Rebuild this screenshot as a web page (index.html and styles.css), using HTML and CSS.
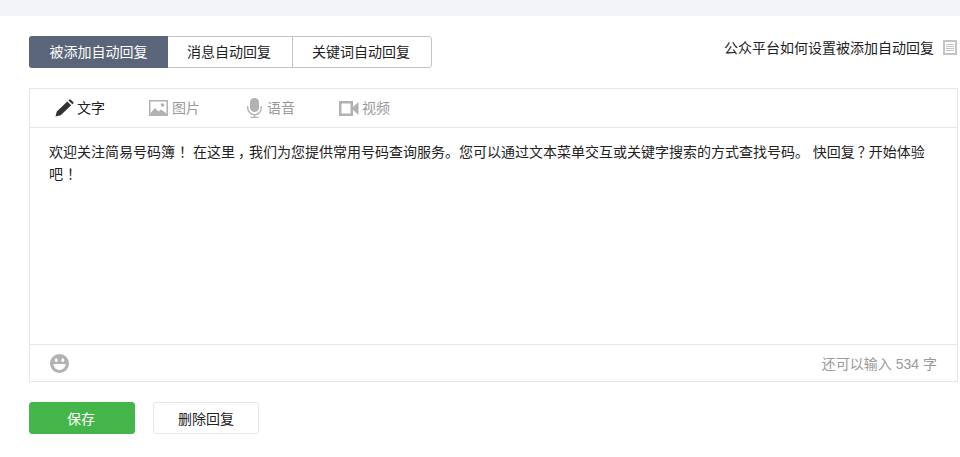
FILE: index.html
```html
<!DOCTYPE html>
<html lang="zh-CN">
<head>
    <meta charset="UTF-8">
    <meta name="viewport" content="width=device-width, initial-scale=1.0">
    <title>被添加自动回复</title>
    <link rel="stylesheet" href="styles.css">
</head>
<body>

<div class="top-band"></div>

<div class="page">
    <div class="tab-row">
        <div class="tabs">
            <a class="tab tab-active">被添加自动回复</a>
            <a class="tab tab-message">消息自动回复</a>
            <a class="tab tab-keyword">关键词自动回复</a>
        </div>
        <a class="help-link">
            <span>公众平台如何设置被添加自动回复</span>
            <svg class="help-icon" width="14" height="15" viewBox="0 0 14 15">
                <path fill="#c4c4c4" fill-rule="evenodd" d="M0 0h14v15H0zM2 2v11h10V2z"/>
                <path fill="#c4c4c4" d="M3 4h8v1H3zM3 6h8v1H3zM3 8h8v1H3zM3 10h8v1H3z"/>
            </svg>
        </a>
    </div>

    <div class="editor">
        <div class="toolbar">
            <a class="tool tool-text">
                <svg width="19" height="18" viewBox="0 0 19 18">
                    <path fill="#333" d="M0.500 17.500l1.300-5L12.300 2.400l3.900 3.800L5.700 16.300zM13.400 1.400l1-1q.5-.4 1 0l3 2.800q.4.5 0 1l-1 1z"/>
                </svg>
                <span>文字</span>
            </a>
            <a class="tool tool-image">
                <svg width="19" height="16" viewBox="0 0 19 16">
                    <path fill="#b2b2b2" fill-rule="evenodd" d="M0 0h19v16H0zM1.500 1.500v13h16v-13z"/>
                    <path fill="#b2b2b2" d="M1.500 13l4.500-5 3.500 3.500 2.500-2 5.500 4v1.500H1.500z"/>
                    <circle fill="#b2b2b2" cx="13.500" cy="5" r="1.800"/>
                </svg>
                <span>图片</span>
            </a>
            <a class="tool tool-voice">
                <svg width="15" height="20" viewBox="0 0 15 20">
                    <rect fill="#b2b2b2" x="3" y="0" width="9" height="14" rx="4.500"/>
                    <path fill="none" stroke="#b2b2b2" stroke-width="1.300" d="M.7 8v2a6.800 6.800 0 0 0 13.600 0V8M7.500 17v2.300M3.500 19.400h8"/>
                </svg>
                <span>语音</span>
            </a>
            <a class="tool tool-video">
                <svg width="20" height="15" viewBox="0 0 20 15">
                    <path fill="#b2b2b2" fill-rule="evenodd" d="M0 0h14v15H0zM2.500 2.500v10h9v-10z"/>
                    <path fill="#b2b2b2" d="M14 6L19.500 1v13L14 9z"/>
                </svg>
                <span>视频</span>
            </a>
        </div>
        <div class="editor-body">欢迎关注简易号码簿<span class="bang">！</span> 在这里<span class="punct">，</span>我们为您提供常用号码查询服务。您可以通过文本菜单交互或关键字搜索的方式查找号码。 快回复<span class="punct">？</span>开始体验<br>吧<span class="bang">！</span></div>
        <div class="editor-foot">
            <svg width="19" height="19" viewBox="0 0 20 20">
                <path fill="#b2b2b2" fill-rule="evenodd" d="M10 0a10 10 0 1 1 0 20a10 10 0 0 1 0-20zM3.500 10.500a6.500 6.500 0 0 0 13 0z"/>
                <ellipse fill="#fff" cx="6.500" cy="6.500" rx="1.500" ry="2"/>
                <ellipse fill="#fff" cx="13.500" cy="6.500" rx="1.500" ry="2"/>
            </svg>
            <span class="counter">还可以输入 534 字</span>
        </div>
    </div>

    <div class="actions">
        <button class="btn btn-save">保存</button>
        <button class="btn btn-delete">删除回复</button>
    </div>
</div>

</body>
</html>
```

FILE: styles.css
```css
body {
    margin: 0;
    background-color: #fff;
    color: #222;
    font-family: "Liberation Sans", "Noto Sans CJK SC", sans-serif;
    font-size: 14px;
}
.top-band {
    height: 16px;
    background-color: #f3f4f8;
}
.page {
    padding: 20px 2px 0 29px;
}
.tab-row {
    display: flex;
    justify-content: space-between;
    align-items: flex-start;
}
.tabs {
    display: flex;
    height: 32px;
    box-sizing: border-box;
    border: 1px solid #c4c4c4;
    border-radius: 3px;
    line-height: 30px;
    text-align: center;
}
.tab {
    display: block;
    border-left: 1px solid #c4c4c4;
}
.tab-active {
    width: 139px;
    margin: -1px 0 -1px -1px;
    height: 32px;
    line-height: 32px;
    border-left: 0;
    border-radius: 3px 0 0 3px;
    background-color: #5a6579;
    color: #fff;
}
.tab-message {
    width: 122px;
    padding-right: 2px;
    border-left: 0;
}
.tab-keyword {
    width: 136px;
    padding-right: 2px;
}
.help-link {
    display: flex;
    align-items: center;
    height: 22px;
    margin-right: 1px;
}
.help-icon {
    margin-left: 9px;
    margin-top: 1px;
}
.editor {
    margin-top: 20px;
    height: 294px;
    box-sizing: border-box;
    border: 1px solid #e7e7eb;
    display: flex;
    flex-direction: column;
}
.toolbar {
    display: flex;
    height: 39px;
    box-sizing: border-box;
    border-bottom: 1px solid #e7e7eb;
    padding-left: 25px;
    line-height: 38px;
}
.tool {
    display: flex;
    align-items: center;
    gap: 4px;
    color: #9a9a9a;
}
.tool-text {
    color: #222;
    width: 94px;
    gap: 3px;
}
.tool-image {
    width: 98px;
}
.tool-voice {
    width: 92px;
    gap: 5px;
}
.tool-video {
    gap: 3px;
}
.editor-body {
    flex: 1;
    padding: 13px 20px 0 19px;
    line-height: 22px;
}
/* full-width marks sit mid-cell in the reference */
.punct {
    padding-left: 3px;
    letter-spacing: -3px;
}
.bang {
    padding-left: 4px;
    letter-spacing: -4px;
}
.editor-foot {
    display: flex;
    justify-content: space-between;
    align-items: center;
    height: 37px;
    box-sizing: border-box;
    border-top: 1px solid #e7e7eb;
    padding: 0 20px;
}
.counter {
    color: #9a9a9a;
}
.actions {
    display: flex;
    gap: 18px;
    margin-top: 20px;
}
.btn {
    width: 106px;
    height: 32px;
    padding: 0;
    border-radius: 3px;
    font-family: inherit;
    font-size: 14px;
    cursor: pointer;
}
.btn-save {
    border: 1px solid #44b549;
    background-color: #44b549;
    color: #fff;
    padding-right: 2px;
}
.btn-delete {
    border: 1px solid #e7e7eb;
    background-color: #fff;
    color: #222;
}
```
